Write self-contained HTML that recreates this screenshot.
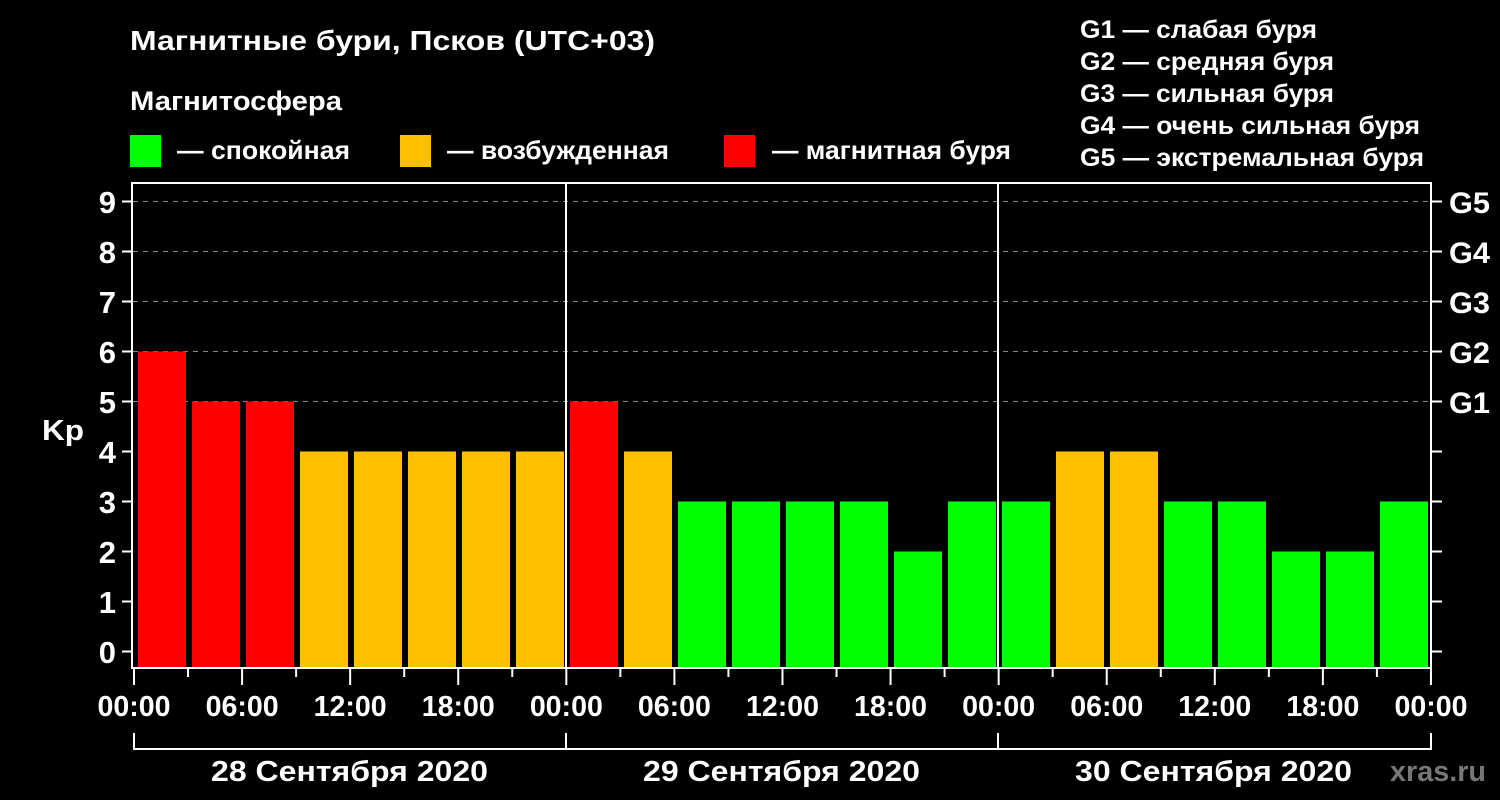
<!DOCTYPE html>
<html><head><meta charset="utf-8"><style>html,body{margin:0;background:#000;width:1500px;height:800px;overflow:hidden}</style></head>
<body>
<svg width="1500" height="800" xmlns="http://www.w3.org/2000/svg" font-family="Liberation Sans, sans-serif" font-weight="bold" fill="#fff">
<rect width="1500" height="800" fill="#000"/>
<text x="130" y="50" font-size="28" textLength="525" lengthAdjust="spacingAndGlyphs">Магнитные бури, Псков (UTC+03)</text>
<text x="130" y="110" font-size="27" textLength="212" lengthAdjust="spacingAndGlyphs">Магнитосфера</text>
<rect x="130" y="135" width="31" height="32" fill="#00ff00"/>
<text x="177" y="159" font-size="26" textLength="173" lengthAdjust="spacingAndGlyphs">— спокойная</text>
<rect x="400" y="135" width="31" height="32" fill="#ffc000"/>
<text x="447" y="159" font-size="26" textLength="222" lengthAdjust="spacingAndGlyphs">— возбужденная</text>
<rect x="724" y="135" width="31" height="32" fill="#ff0000"/>
<text x="772" y="159" font-size="26" textLength="239" lengthAdjust="spacingAndGlyphs">— магнитная буря</text>
<g font-size="25" lengthAdjust="spacingAndGlyphs">
<text x="1080" y="38" textLength="237" lengthAdjust="spacingAndGlyphs">G1 — слабая буря</text>
<text x="1080" y="70" textLength="254" lengthAdjust="spacingAndGlyphs">G2 — средняя буря</text>
<text x="1080" y="102" textLength="254" lengthAdjust="spacingAndGlyphs">G3 — сильная буря</text>
<text x="1080" y="134" textLength="340" lengthAdjust="spacingAndGlyphs">G4 — очень сильная буря</text>
<text x="1080" y="166" textLength="344" lengthAdjust="spacingAndGlyphs">G5 — экстремальная буря</text>
</g>
<g stroke="#888" stroke-width="1" stroke-dasharray="5,5">
<line x1="133" x2="1431" y1="201.5" y2="201.5"/>
<line x1="133" x2="1431" y1="251.5" y2="251.5"/>
<line x1="133" x2="1431" y1="301.5" y2="301.5"/>
<line x1="133" x2="1431" y1="351.5" y2="351.5"/>
<line x1="133" x2="1431" y1="401.5" y2="401.5"/>
</g>
<g id="bars"></g>
<g stroke="#fff" stroke-width="2" fill="none">
<rect x="132" y="183" width="1299" height="485"/>
<line x1="566" x2="566" y1="183" y2="668"/>
<line x1="998" x2="998" y1="183" y2="668"/>
<path d="M134 733V749H1431V733M566 733V749M998 733V749"/>
</g>
<g id="ticks" stroke="#fff" stroke-width="2"></g>
<g font-size="31" text-anchor="end">
<text x="116" y="213">9</text><text x="116" y="263">8</text><text x="116" y="313">7</text><text x="116" y="363">6</text><text x="116" y="413">5</text><text x="116" y="463">4</text><text x="116" y="513">3</text><text x="116" y="563">2</text><text x="116" y="613">1</text><text x="116" y="663">0</text>
</g>
<text x="42" y="440" font-size="29" textLength="42" lengthAdjust="spacingAndGlyphs">Kp</text>
<g font-size="30">
<text x="1449" y="213" textLength="41" lengthAdjust="spacingAndGlyphs">G5</text><text x="1449" y="263" textLength="41" lengthAdjust="spacingAndGlyphs">G4</text><text x="1449" y="313" textLength="41" lengthAdjust="spacingAndGlyphs">G3</text><text x="1449" y="363" textLength="41" lengthAdjust="spacingAndGlyphs">G2</text><text x="1449" y="413" textLength="41" lengthAdjust="spacingAndGlyphs">G1</text>
</g>
<g font-size="29" id="hrs"></g>
<g font-size="29">
<text x="211" y="781" textLength="277" lengthAdjust="spacingAndGlyphs">28 Сентября 2020</text>
<text x="643" y="781" textLength="277" lengthAdjust="spacingAndGlyphs">29 Сентября 2020</text>
<text x="1075" y="781" textLength="277" lengthAdjust="spacingAndGlyphs">30 Сентября 2020</text>
</g>
<text x="1390" y="781" font-size="29" fill="#777" textLength="96" lengthAdjust="spacingAndGlyphs">xras.ru</text>
</svg>
<script>
var v=[6,5,5,4,4,4,4,4,5,4,3,3,3,3,2,3,3,4,4,3,3,2,2,3],ns="http://www.w3.org/2000/svg",b=document.getElementById("bars"),t=document.getElementById("ticks"),h=document.getElementById("hrs");
function el(n,a,p){var e=document.createElementNS(ns,n);for(var k in a)e.setAttribute(k,a[k]);p.appendChild(e);return e}
v.forEach(function(k,i){var y=651.5-50*k;el("rect",{x:138+54*i,y:y,width:48,height:668-y,fill:k>=5?"#ff0000":k==4?"#ffc000":"#00ff00"},b)});
for(var i=0;i<10;i++){var y=201.5+50*i;el("line",{x1:122,x2:132,y1:y,y2:y},t);el("line",{x1:1431,x2:1442,y1:y,y2:y},t)}
for(var i=0;i<=24;i++){var x=134+i*54.04;el("line",{x1:x,x2:x,y1:668,y2:i%2==0?685:677},t);if(i%2==0){var tx=el("text",{x:x-36.5,y:716,textLength:73,lengthAdjust:"spacingAndGlyphs"},h);tx.textContent=["00:00","06:00","12:00","18:00"][(i/2)%4]}}
</script>
</body></html>
